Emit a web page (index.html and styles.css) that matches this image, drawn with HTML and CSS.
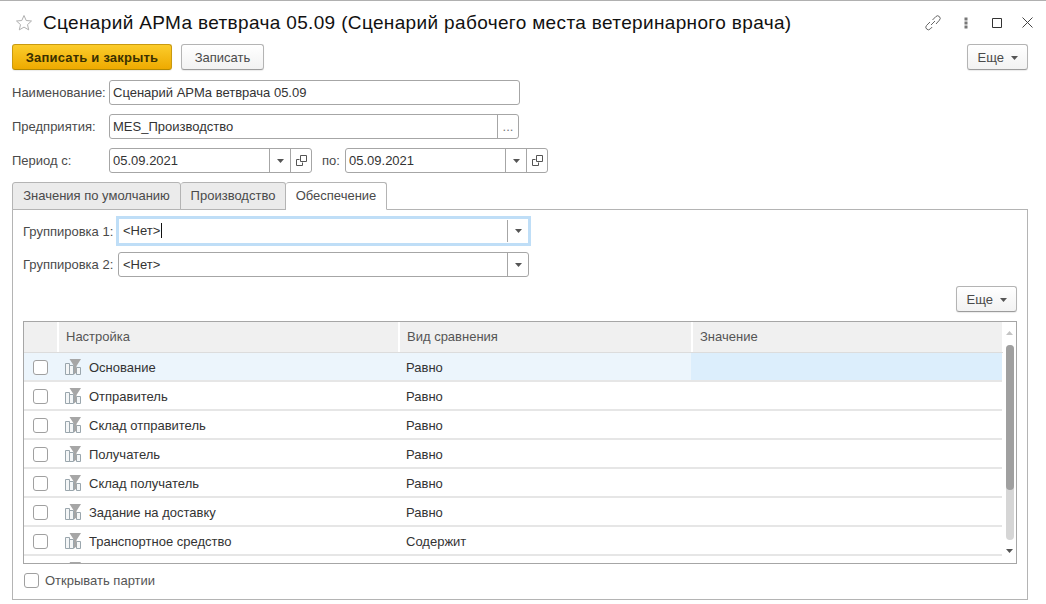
FILE: index.html
```html
<!DOCTYPE html>
<html lang="ru">
<head>
  <meta charset="UTF-8">
  <title>Сценарий АРМа ветврача 05.09</title>
  <link rel="stylesheet" href="styles.css">
</head>
<body>
  <svg class="defs" width="0" height="0">
    <symbol id="drop" viewBox="0 0 7 4"><path d="M0 0h7L3.500 4z" fill="#555"/></symbol>
    <symbol id="open" viewBox="0 0 13 13">
      <path d="M5.500 1.500h6v6h-6z M4.500 5.500h-3v6h6v-3" fill="none" stroke="#555"/>
    </symbol>
    <symbol id="filter" viewBox="0 0 16 16">
      <path d="M.5 4.500h4v11h-4z M4.500 6.500h4v9h-4z M11.500 8.500h4v7h-4z" fill="#f4f6f7" stroke="#9aa6ad"/>
      <path d="M4.500 0H16l-4.500 7v6.500L9 15.500V7z" fill="#a6a6a6"/>
    </symbol>
  </svg>

  <div class="form">
    <header class="titlebar">
      <svg class="star" width="18" height="18" viewBox="0 0 18 18">
        <path d="M9 1.500l2.200 5 5.300.5-4 3.600 1.200 5.300L9 13.100l-4.700 2.800 1.200-5.300-4-3.600 5.300-.5z" fill="#fff" stroke="#b0b0b0"/>
      </svg>
      <h1 class="title">Сценарий АРМа ветврача 05.09 (Сценарий рабочего места ветеринарного врача)</h1>
      <div class="window-tools">
        <svg width="18" height="18" viewBox="0 0 18 18">
          <path d="M7 11l4-4M6 8l-3.400 3.400a2.500 2.500 0 0 0 3.600 3.600l2-2M12 10l3.400-3.800a2.500 2.500 0 0 0-3.600-3.600L8.500 6" fill="none" stroke="#666"/>
        </svg>
        <svg class="tool-dots" width="4" height="12" viewBox="0 0 4 12">
          <path d="M.5 .5h3v3h-3z M.5 4.500h3v3h-3z M.5 8.500h3v3h-3z" fill="#777"/>
        </svg>
        <svg class="tool-max" width="10" height="10" viewBox="0 0 10 10">
          <path d="M.5 .5h9v9h-9z" fill="none" stroke="#333"/>
        </svg>
        <svg class="tool-close" width="11" height="11" viewBox="0 0 11 11">
          <path d="M.5 .5l10 10M10.500 .5l-10 10" fill="none" stroke="#444"/>
        </svg>
      </div>
    </header>

    <div class="commandbar">
      <button class="btn btn-primary">Записать и закрыть</button>
      <button class="btn btn-save">Записать</button>
      <button class="btn btn-more">Еще <svg width="7" height="4"><use href="#drop"/></svg></button>
    </div>

    <div class="field-row">
      <label class="label">Наименование:</label>
      <div class="input input-name"><span class="input-text">Сценарий АРМа ветврача 05.09</span></div>
    </div>
    <div class="field-row">
      <label class="label">Предприятия:</label>
      <div class="input input-org">
        <span class="input-text">MES_Производство</span>
        <span class="input-btn input-dots">...</span>
      </div>
    </div>
    <div class="field-row">
      <label class="label">Период с:</label>
      <div class="input input-date">
        <span class="input-text">05.09.2021</span>
        <span class="input-btn"><svg width="7" height="4"><use href="#drop"/></svg></span>
        <span class="input-btn"><svg width="13" height="13"><use href="#open"/></svg></span>
      </div>
      <label class="label-to">по:</label>
      <div class="input input-date">
        <span class="input-text">05.09.2021</span>
        <span class="input-btn"><svg width="7" height="4"><use href="#drop"/></svg></span>
        <span class="input-btn"><svg width="13" height="13"><use href="#open"/></svg></span>
      </div>
    </div>

    <div class="tabs">
      <div class="tab tab-first">Значения по умолчанию</div>
      <div class="tab tab-second">Производство</div>
      <div class="tab tab-active">Обеспечение</div>
    </div>

    <section class="panel">
      <div class="group-row group-row-focus">
        <label class="group-label">Группировка 1:</label>
        <div class="input input-focus">
          <span class="input-text">&lt;Нет&gt;<i class="caret"></i></span>
          <span class="input-btn input-btn-short"><svg width="7" height="4"><use href="#drop"/></svg></span>
        </div>
      </div>
      <div class="group-row">
        <label class="group-label">Группировка 2:</label>
        <div class="input input-group">
          <span class="input-text">&lt;Нет&gt;</span>
          <span class="input-btn"><svg width="7" height="4"><use href="#drop"/></svg></span>
        </div>
      </div>

      <div class="table-bar">
        <button class="btn btn-more">Еще <svg width="7" height="4"><use href="#drop"/></svg></button>
      </div>

      <div class="table">
        <div class="thead">
          <div class="th"></div>
          <div class="th">Настройка</div>
          <div class="th">Вид сравнения</div>
          <div class="th">Значение</div>
        </div>
        <div class="row row-current">
          <div class="cell"><i class="check"></i></div>
          <div class="cell cell-name"><svg width="16" height="16"><use href="#filter"/></svg>Основание</div>
          <div class="cell">Равно</div>
          <div class="cell cell-value"></div>
        </div>
        <div class="row">
          <div class="cell"><i class="check"></i></div>
          <div class="cell cell-name"><svg width="16" height="16"><use href="#filter"/></svg>Отправитель</div>
          <div class="cell">Равно</div>
          <div class="cell"></div>
        </div>
        <div class="row">
          <div class="cell"><i class="check"></i></div>
          <div class="cell cell-name"><svg width="16" height="16"><use href="#filter"/></svg>Склад отправитель</div>
          <div class="cell">Равно</div>
          <div class="cell"></div>
        </div>
        <div class="row">
          <div class="cell"><i class="check"></i></div>
          <div class="cell cell-name"><svg width="16" height="16"><use href="#filter"/></svg>Получатель</div>
          <div class="cell">Равно</div>
          <div class="cell"></div>
        </div>
        <div class="row">
          <div class="cell"><i class="check"></i></div>
          <div class="cell cell-name"><svg width="16" height="16"><use href="#filter"/></svg>Склад получатель</div>
          <div class="cell">Равно</div>
          <div class="cell"></div>
        </div>
        <div class="row">
          <div class="cell"><i class="check"></i></div>
          <div class="cell cell-name"><svg width="16" height="16"><use href="#filter"/></svg>Задание на доставку</div>
          <div class="cell">Равно</div>
          <div class="cell"></div>
        </div>
        <div class="row">
          <div class="cell"><i class="check"></i></div>
          <div class="cell cell-name"><svg width="16" height="16"><use href="#filter"/></svg>Транспортное средство</div>
          <div class="cell">Содержит</div>
          <div class="cell"></div>
        </div>
        <div class="row row-cut">
          <div class="cell"></div>
          <div class="cell cell-name"><svg width="16" height="16"><use href="#filter"/></svg></div>
          <div class="cell"></div>
          <div class="cell"></div>
        </div>
        <div class="scrollbar">
          <svg class="scroll-arrow" width="7" height="4" viewBox="0 0 7 4"><path d="M0 4h7L3.500 0z" fill="#c4c4c4"/></svg>
          <div class="scroll-track"><div class="scroll-thumb"></div></div>
          <svg class="scroll-arrow" width="7" height="4"><use href="#drop"/></svg>
        </div>
      </div>

      <label class="open-batches"><i class="check"></i>Открывать партии</label>
    </section>
  </div>
</body>
</html>
```

FILE: styles.css
```css
* {
  box-sizing: border-box;
}

html,
body {
  margin: 0;
  height: 100%;
  overflow: hidden;
  background: #fff;
}

body {
  font-family: 'Liberation Sans', Arial, sans-serif;
  font-size: 13px;
  color: #4a4a4a;
}

.defs {
  position: absolute;
}

.form {
  height: 604px;
  padding: 0 18px 0 12px;
  border-top: 1px solid #b0b0b0;
}

.titlebar {
  display: flex;
  align-items: center;
  height: 43px;
}

.star {
  margin-left: 3px;
  flex: none;
}

.title {
  margin: 0 0 0 10px;
  font-size: 19px;
  letter-spacing: .35px;
  font-weight: normal;
  color: #111;
  white-space: nowrap;
}

.window-tools {
  display: flex;
  align-items: center;
  margin-left: auto;
  margin-right: -5px;
}

.tool-dots {
  margin-left: 22px;
}

.tool-max {
  margin-left: 24px;
}

.tool-close {
  margin-left: 20px;
}

.commandbar {
  display: flex;
  height: 26px;
  margin-bottom: 10px;
}

.btn {
  height: 26px;
  padding: 0;
  font: inherit;
  color: #4a4a4a;
  background: linear-gradient(#fff, #f2f2f2);
  border: 1px solid #b4b4b4;
  border-bottom-color: #9c9c9c;
  border-radius: 3px;
  box-shadow: 0 1px 1px rgba(0, 0, 0, 0.08);
}

.btn-primary {
  width: 160px;
  font-weight: bold;
  letter-spacing: .2px;
  color: #3a3000;
  background: linear-gradient(#fbcc2c, #eeaa00);
  border-color: #c99a10;
  border-bottom-color: #b58a00;
}

.btn-save {
  width: 83px;
  margin-left: 9px;
}

.btn-more {
  width: 61px;
  margin-left: auto;
}

.btn-more svg {
  margin-left: 3px;
  vertical-align: 2px;
}

.field-row {
  display: flex;
  align-items: center;
  height: 25px;
  margin-bottom: 9px;
}

.label {
  width: 97px;
  flex: none;
}

.label-to {
  width: 33px;
  padding-left: 10px;
  flex: none;
}

.input {
  display: flex;
  align-items: stretch;
  height: 25px;
  color: #333;
  background: #fff;
  border: 1px solid #a6a6a6;
  border-radius: 3px;
}

.input-text {
  flex: 1;
  padding-left: 3px;
  line-height: 23px;
  white-space: nowrap;
}

.input-btn {
  display: flex;
  align-items: center;
  justify-content: center;
  flex: none;
  width: 21px;
  border-left: 1px solid #a6a6a6;
}

.input-dots {
  align-items: flex-end;
  padding-bottom: 6px;
  line-height: 10px;
  color: #777;
}

.input-name {
  width: 411px;
}

.input-org {
  width: 410px;
}

.input-date {
  width: 203px;
}

.tabs {
  display: flex;
  height: 27px;
}

.tab {
  height: 28px;
  line-height: 26px;
  text-align: center;
  color: #4a4a4a;
  background: #ebebeb;
  border: 1px solid #b4b4b4;
  border-left-width: 0;
  border-radius: 3px 3px 0 0;
}

.tab-first {
  width: 169px;
  border-left-width: 1px;
}

.tab-second {
  width: 105px;
}

.tab-active {
  position: relative;
  width: 101px;
  background: #fff;
  border-bottom-color: #fff;
}

.panel {
  height: 391px;
  padding: 6px 10px 0;
  border: 1px solid #b4b4b4;
}

.group-row {
  display: flex;
  align-items: center;
  height: 25px;
  margin-bottom: 9px;
}

.group-row-focus {
  height: 30px;
  margin-bottom: 6px;
}

.group-label {
  width: 95px;
  flex: none;
}

.input-group {
  width: 411px;
}

.input-group .input-text {
  padding-left: 4px;
}

.input-focus {
  width: 415px;
  height: 30px;
  margin-left: -2px;
  border: 3px solid #bfdef7;
  border-radius: 0;
}

.input-focus .input-text {
  padding-left: 4px;
  line-height: 24px;
}

.input-btn-short {
  width: 21px;
  margin: 1px 0;
}

.caret {
  display: inline-block;
  width: 1px;
  height: 15px;
  margin-left: 1px;
  vertical-align: -3px;
  background: #111;
}

.table-bar {
  display: flex;
  height: 26px;
  margin-bottom: 9px;
}

.table {
  position: relative;
  height: 243px;
  overflow: hidden;
  border: 1px solid #a6a6a6;
}

.thead,
.row {
  display: grid;
  grid-template-columns: 33px 341px 293px 311px;
}

.thead {
  height: 31px;
  border-bottom: 1px solid #dcdcdc;
}

.th {
  padding-left: 7px;
  line-height: 29px;
  color: #555;
  background: #f0f0f0;
  border-left: 2px solid #fff;
}

.th:first-child {
  border-left: 0;
}

.row {
  height: 29px;
  color: #333;
}

.cell {
  display: flex;
  align-items: center;
  height: 29px;
  padding-left: 8px;
  padding-top: 1px;
  border-bottom: 2px solid #e6e6e6;
}

.row > .cell:first-child {
  padding-left: 9px;
}

.cell-name svg {
  margin-right: 8px;
  flex: none;
}

.row-current .cell {
  background: #ecf5fc;
}

.row-current .cell-value {
  background: #dceefc;
}

.check {
  display: inline-block;
  flex: none;
  width: 15px;
  height: 15px;
  background: #fff;
  border: 1px solid #a0a0a0;
  border-radius: 3px;
}

.scrollbar {
  position: absolute;
  top: 0;
  right: 0;
  bottom: 0;
  display: flex;
  flex-direction: column;
  align-items: center;
  width: 13px;
  padding: 9px 0 10px;
  background: #fff;
}

.scroll-arrow {
  flex: none;
}

.scroll-track {
  flex: 1;
  width: 8px;
  margin: 10px 0 9px;
  background: #d6d6d6;
  border-radius: 4px;
}

.scroll-thumb {
  height: 145px;
  background: #a0a0a0;
  border-radius: 4px;
}

.open-batches {
  display: flex;
  align-items: center;
  margin-top: 9px;
  margin-left: 1px;
  color: #555;
}

.open-batches .check {
  margin-right: 6px;
}
```
